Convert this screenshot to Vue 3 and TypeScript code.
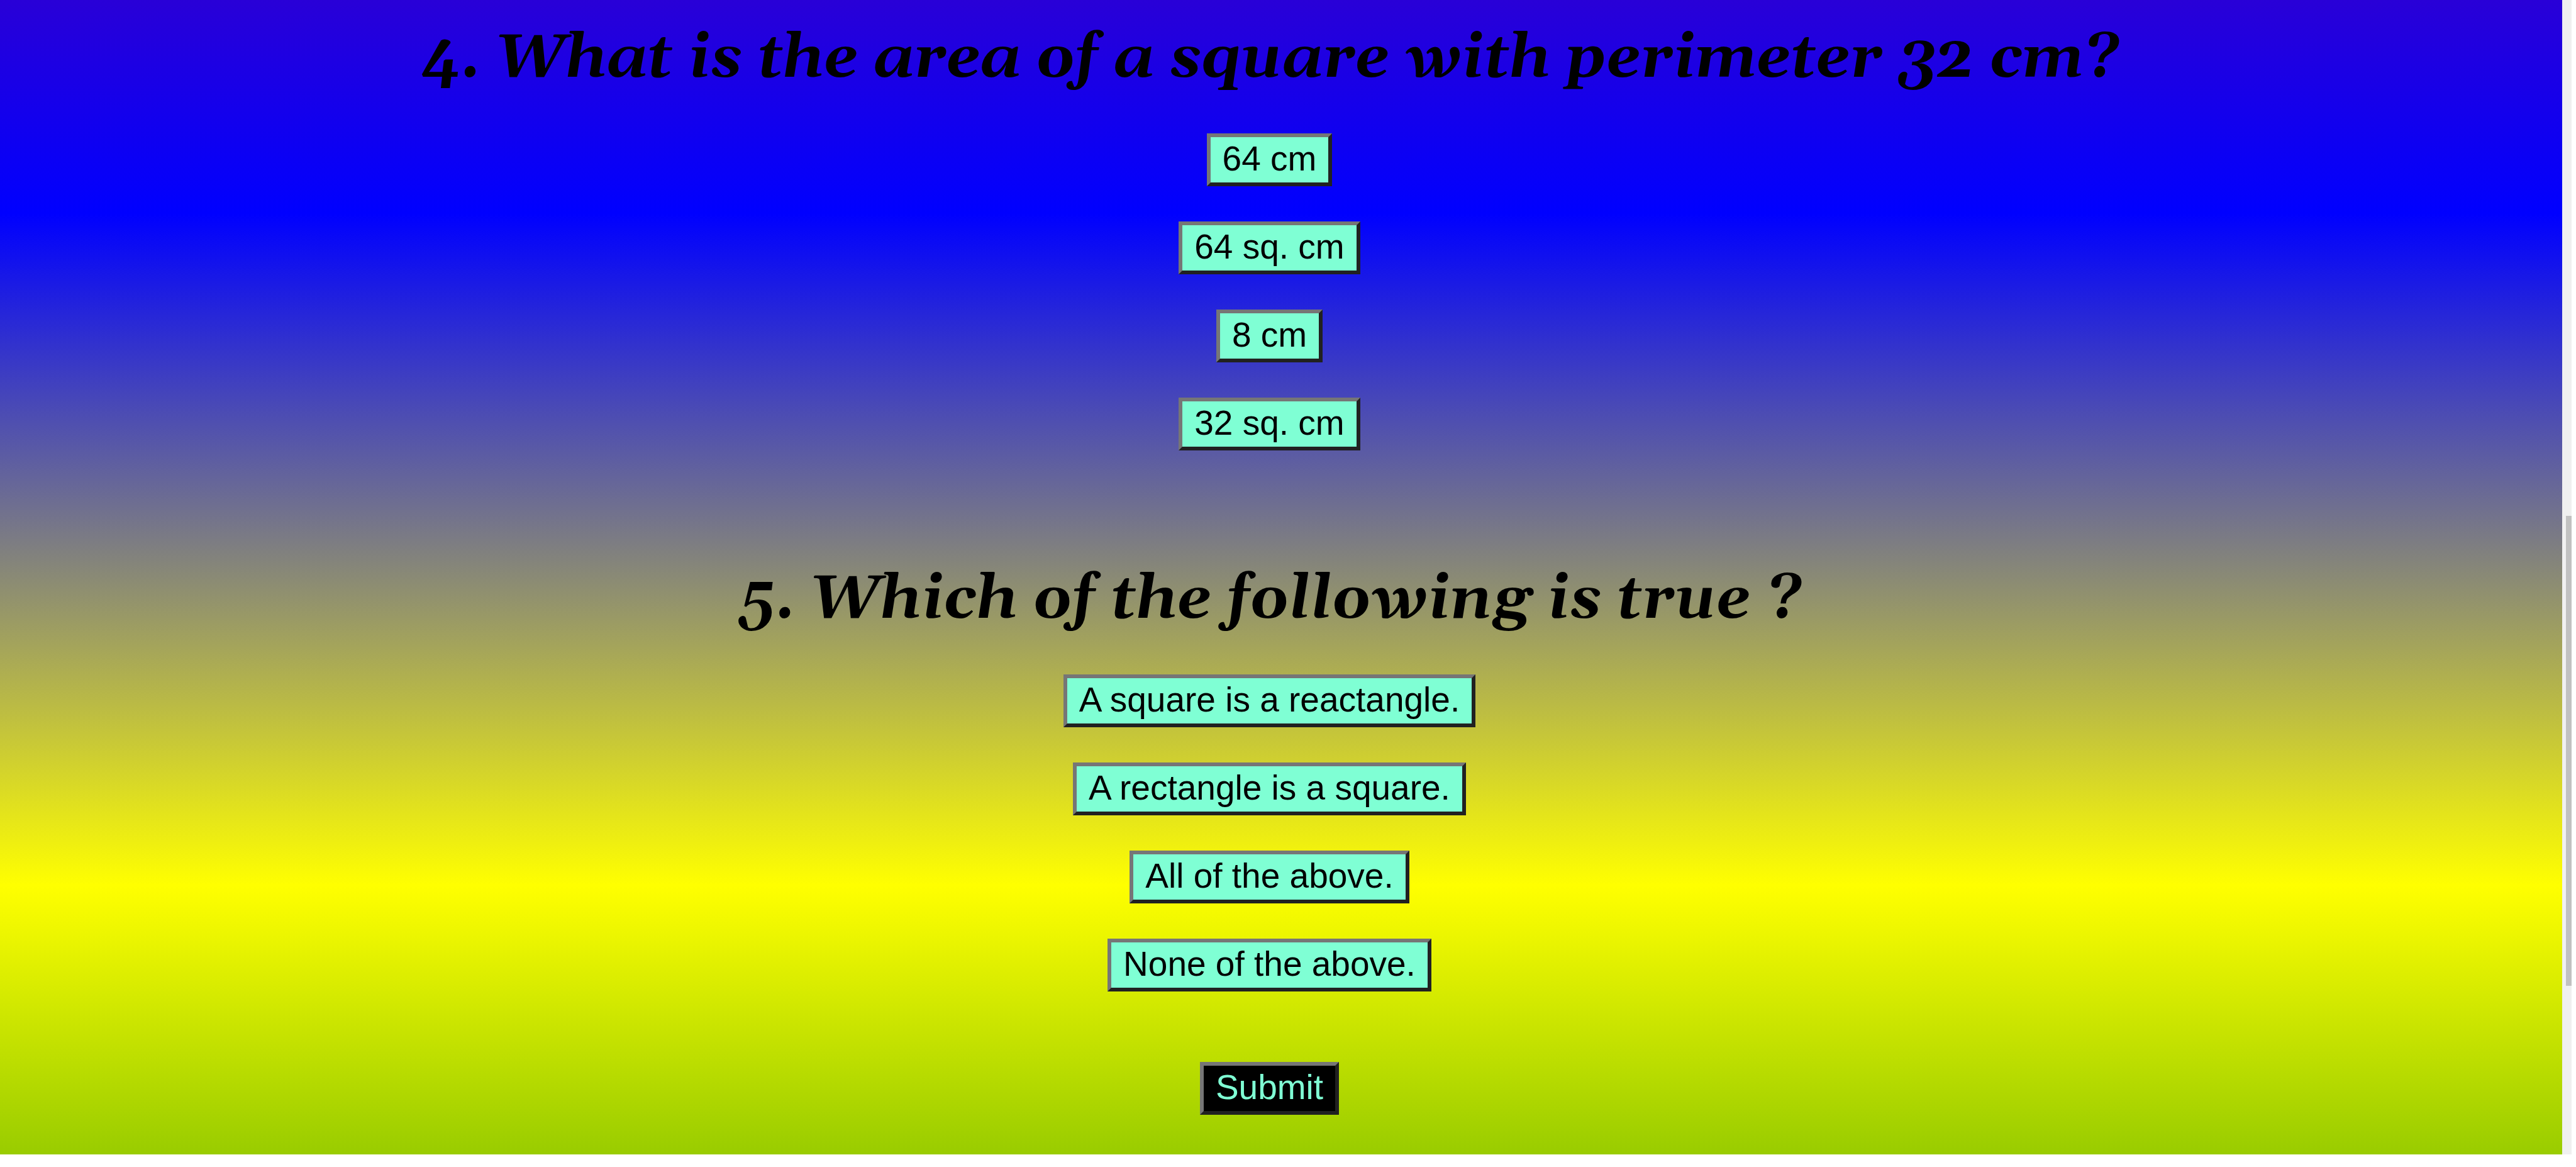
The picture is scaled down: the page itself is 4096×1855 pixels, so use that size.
<script setup lang="ts">
interface Question {
  id: number
  text: string
  options: string[]
}

const questions: Question[] = [
  {
    id: 4,
    text: 'What is the area of a square with perimeter 32 cm?',
    options: ['64 cm', '64 sq. cm', '8 cm', '32 sq. cm'],
  },
  {
    id: 5,
    text: 'Which of the following is true ?',
    options: [
      'A square is a reactangle.',
      'A rectangle is a square.',
      'All of the above.',
      'None of the above.',
    ],
  },
]
</script>

<template>
  <div class="page">
    <main class="quiz">
      <section v-for="q in questions" :key="q.id" class="question">
        <h1 class="title">{{ q.id }}. {{ q.text }}</h1>
        <div class="options">
          <button v-for="o in q.options" :key="o" type="button" class="btn">{{ o }}</button>
        </div>
      </section>
      <button type="submit" class="btn submit">Submit</button>
    </main>
    <div class="track" aria-hidden="true">
      <div class="thumb"></div>
    </div>
  </div>
</template>

<style>
body {
  margin: 0;
  background: #fff;
}
</style>

<style scoped>
.page {
  display: flex;
  padding-right: 7px;
}

.quiz {
  flex: 1;
  display: flex;
  flex-direction: column;
  align-items: center;
  padding: 31px 37px 63px 0;
  background: linear-gradient(#2900d7, #0000ff 18.5%, #ffff00 76.7%, #99cc00);
}

.question {
  display: flex;
  flex-direction: column;
  align-items: center;
  gap: 55px;
}

.question + .question {
  margin-top: 175px;
}

.title {
  margin: 0;
  font: italic bold 97px/126px Georgia, Gelasio, 'Liberation Serif', serif;
  color: #000;
  white-space: nowrap;
}

.options {
  display: flex;
  flex-direction: column;
  align-items: center;
  gap: 56px;
}

.btn {
  margin: 0;
  padding: 3px 19px 7px;
  border: 6px solid;
  border-color: #767676 #212121 #212121 #767676;
  border-radius: 0;
  background: #7fffd4;
  color: #000;
  font: 55px/62px 'Liberation Sans', Arial, sans-serif;
}

.submit {
  margin-top: 112px;
  background: #000;
  color: #7fffd4;
}

.track {
  display: flex;
  flex-direction: column;
  width: 15px;
  background: #f0f0f0;
}

.track::before {
  content: '';
  flex: 820 0 0;
}

.thumb {
  flex: 747 0 0;
  margin-left: 6px;
  background: #c1c1c1;
}

.track::after {
  content: '';
  flex: 268 0 0;
}
</style>
